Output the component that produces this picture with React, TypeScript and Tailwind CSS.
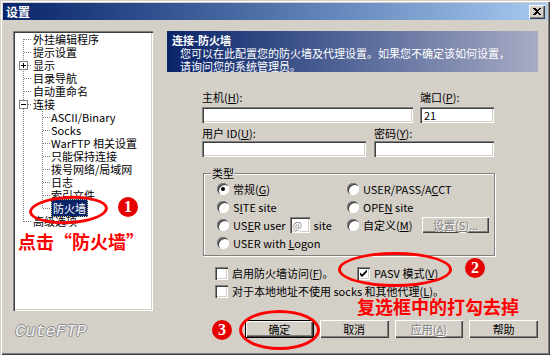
import React from 'react';

const raised =
  'bg-[#d4d0c8] shadow-[inset_1px_1px_0_#ffffff,inset_-1px_-1px_0_#404040,inset_-2px_-2px_0_#808080]';
const sunken =
  'bg-white shadow-[inset_1px_1px_0_#808080,inset_2px_2px_0_#404040,inset_-1px_-1px_0_#ffffff,inset_-2px_-2px_0_#d4d0c8]';
const dimText = 'text-[#808080] [text-shadow:1px_1px_0_#ffffff]';

type TreeNode = { label: string; depth: 0 | 1; selected?: boolean };

const tree: TreeNode[] = [
  { label: '外挂编辑程序', depth: 0 },
  { label: '提示设置', depth: 0 },
  { label: '显示', depth: 0 },
  { label: '目录导航', depth: 0 },
  { label: '自动重命名', depth: 0 },
  { label: '连接', depth: 0 },
  { label: 'ASCII/Binary', depth: 1 },
  { label: 'Socks', depth: 1 },
  { label: 'WarFTP 相关设置', depth: 1 },
  { label: '只能保持连接', depth: 1 },
  { label: '拨号网络/局域网', depth: 1 },
  { label: '日志', depth: 1 },
  { label: '索引文件', depth: 1 },
  { label: '防火墙', depth: 1, selected: true },
  { label: '高级选项', depth: 0 },
];

function U({ children }: { children: React.ReactNode }) {
  return <span className="underline underline-offset-1">{children}</span>;
}

function TreeLines() {
  const cy = (i: number) => i * 13 + 6.5;
  return (
    <svg
      className="absolute left-[2px] top-[2px] pointer-events-none"
      width="136"
      height="200"
      shapeRendering="crispEdges"
    >
      <g stroke="#808080" strokeDasharray="1 1" strokeWidth="1">
        <line x1="8.5" y1="6" x2="8.5" y2="189" />
        <line x1="27.5" y1="72" x2="27.5" y2="176" />
        {tree.map((n, i) =>
          n.depth === 0 ? (
            <line key={i} x1={i === 2 || i === 5 ? 13 : 9} y1={cy(i)} x2="16" y2={cy(i)} />
          ) : (
            <line key={i} x1="28" y1={cy(i)} x2="35" y2={cy(i)} />
          )
        )}
      </g>
      {[2, 5].map((i) => (
        <g key={i}>
          <rect x="4.5" y={cy(i) - 4} width="8" height="8" fill="#fff" stroke="#808080" />
          <line x1="6" y1={cy(i)} x2="11" y2={cy(i)} stroke="#000" />
          {i === 2 && <line x1="8.5" y1={cy(i) - 2.5} x2="8.5" y2={cy(i) + 2.5} stroke="#000" />}
        </g>
      ))}
    </svg>
  );
}

function Radio({ checked }: { checked?: boolean }) {
  return (
    <span className="w-3 h-3 shrink-0 rounded-full bg-white shadow-[inset_1px_1px_0_#808080,inset_2px_2px_0_#404040,inset_-1px_-1px_0_#ffffff] flex items-center justify-center">
      {checked && <span className="w-1 h-1 rounded-full bg-black" />}
    </span>
  );
}

function Check({ checked }: { checked?: boolean }) {
  return (
    <span className={`w-[13px] h-[13px] shrink-0 ${sunken} flex items-center justify-center`}>
      {checked && (
        <svg width="7" height="7" viewBox="0 0 7 7">
          <path d="M0 2.5L2 4.5L7 -0.5V2L2 7L0 5Z" fill="#000" />
        </svg>
      )}
    </span>
  );
}

function Btn({ children, def, disabled }: { children: React.ReactNode; def?: boolean; disabled?: boolean }) {
  return (
    <div
      className={`w-[69px] h-[18px] flex items-center justify-center ${raised} ${
        def ? 'border border-black' : ''
      } ${disabled ? dimText : ''}`}
    >
      {children}
    </div>
  );
}

export default function App() {
  return (
    <div className="relative w-[550px] h-[355px] bg-[#d4d0c8] p-[3px] text-black text-[11px] leading-[13px] font-['Noto_Sans_CJK_SC',sans-serif] shadow-[inset_1px_1px_0_#d4d0c8,inset_2px_2px_0_#ffffff,inset_-1px_-1px_0_#404040,inset_-2px_-2px_0_#808080] overflow-hidden">
      {/* title bar */}
      <div className="h-[17px] flex items-center justify-between bg-linear-to-r from-[#0a246a] to-[#a6caf0] pl-[3px] pr-[2px]">
        <span className="text-white font-bold text-[12px]">设置</span>
        <div className={`w-[16px] h-[14px] ${raised} flex items-center justify-center`}>
          <svg width="8" height="7" viewBox="0 0 8 7" shapeRendering="crispEdges">
            <path d="M0 0h2l2 2 2-2h2L5 3.5 8 7H6L4 5 2 7H0l3-3.5z" fill="#000" />
          </svg>
        </div>
      </div>

      <div className="flex pt-[11px] pl-[10px] gap-[14px]">
        {/* left: tree */}
        <div className="w-[140px] flex flex-col">
          <div className={`relative h-[280px] ${sunken} p-[2px]`}>
            <TreeLines />
            {tree.map((n) => (
              <div
                key={n.label}
                className={`h-[13px] leading-[13px] whitespace-nowrap ${n.depth === 0 ? 'pl-[18px]' : 'pl-[36px]'}`}
              >
                {n.selected ? (
                  <span className="bg-[#0a246a] text-white border border-dotted border-[#c8c88a] px-[1px]">
                    {n.label}
                  </span>
                ) : (
                  n.label
                )}
              </div>
            ))}
          </div>
          <div className="mt-[12px] pl-[2px] font-['Liberation_Mono',monospace] italic text-[17px] leading-[18px] text-[#f4f4f4] [text-shadow:-1px_0_0_#8a8a8a,1px_0_0_#8a8a8a,0_-1px_0_#8a8a8a,0_1px_0_#8a8a8a]">
            CuteFTP
          </div>
        </div>

        {/* right panel */}
        <div className="w-[371px] flex flex-col">
          <div className="h-[41px] bg-linear-to-r from-[#0a246a] to-[#a8abc4] text-white pt-[3px] pl-[5px]">
            <div className="font-bold">连接-防火墙</div>
            <div className="pl-[8px]">您可以在此配置您的防火墙及代理设置。如果您不确定该如何设置，</div>
            <div className="pl-[8px]">请询问您的系统管理员。</div>
          </div>

          <div className="mt-[19px] flex pl-[35px] h-[13px]">
            <span className="w-[218px]">
              主机(<U>H</U>):
            </span>
            <span>
              端口(<U>P</U>):
            </span>
          </div>
          <div className="mt-[3px] flex pl-[35px] gap-[7px]">
            <div className={`w-[211px] h-[16px] ${sunken}`} />
            <div className={`w-[74px] h-[16px] ${sunken} pl-[4px] leading-[16px]`}>21</div>
          </div>

          <div className="mt-[4px] flex pl-[35px] h-[13px]">
            <span className="w-[172px]">
              用户 ID(<U>U</U>):
            </span>
            <span>
              密码(<U>Y</U>):
            </span>
          </div>
          <div className="mt-[1px] flex pl-[35px] gap-[8px]">
            <div className={`w-[164px] h-[16px] ${sunken}`} />
            <div className={`w-[120px] h-[16px] ${sunken}`} />
          </div>

          {/* type group */}
          <div className="relative mt-[16px] ml-[36px] w-[292px] h-[83px] border border-[#808080] shadow-[inset_1px_1px_0_#ffffff,1px_1px_0_#ffffff] pt-[6px] pl-[13px]">
            <span className="absolute -top-[7px] left-[7px] px-[1px] bg-[#d4d0c8]">类型</span>
            <div className="grid grid-cols-[130px_1fr]">
              <div className="h-[18px] flex items-center gap-[4px]">
                <Radio checked />
                <span>
                  常规(<U>G</U>)
                </span>
              </div>
              <div className="h-[18px] flex items-center gap-[4px]">
                <Radio />
                <span>
                  USER/PASS/A<U>C</U>CT
                </span>
              </div>

              <div className="h-[18px] flex items-center gap-[4px]">
                <Radio />
                <span>
                  S<U>I</U>TE site
                </span>
              </div>
              <div className="h-[18px] flex items-center gap-[4px]">
                <Radio />
                <span>
                  OPE<U>N</U> site
                </span>
              </div>

              <div className="h-[18px] flex items-center gap-[4px]">
                <Radio />
                <span>
                  US<U>E</U>R user
                </span>
                <div className={`w-[20px] h-[16px] ${sunken} bg-[#d4d0c8] ${dimText} pl-[3px] leading-[15px] text-[10px]`}>@</div>
                <span>site</span>
              </div>
              <div className="h-[18px] flex items-center gap-[4px]">
                <Radio />
                <span className="w-[55px]">
                  自定义(<U>M</U>)
                </span>
                <div className={`w-[67px] h-[16px] ${raised} ${dimText} flex items-center justify-center`}>
                  设置(<U>S</U>)...
                </div>
              </div>

              <div className="h-[18px] flex items-center gap-[4px]">
                <Radio />
                <span>
                  USER with <U>L</U>ogon
                </span>
              </div>
            </div>
          </div>

          {/* checkboxes */}
          <div className="mt-[11px] flex pl-[48px] h-[13px]">
            <div className="w-[142px] flex items-center gap-[4px]">
              <Check />
              <span>
                启用防火墙访问(<U>F</U>)。
              </span>
            </div>
            <div className="flex items-center gap-[4px]">
              <Check checked />
              <span>
                PASV 模式(<U>V</U>)
              </span>
            </div>
          </div>
          <div className="mt-[5px] flex pl-[48px] h-[13px] items-center gap-[4px]">
            <Check />
            <span>
              对于本地地址不使用 socks 和其他代理(<U>L</U>)。
            </span>
          </div>

          {/* buttons */}
          <div className="mt-[22px] flex pl-[78px] gap-[6px]">
            <Btn def>确定</Btn>
            <Btn>取消</Btn>
            <Btn disabled>
              应用(<U>A</U>)
            </Btn>
            <Btn>帮助</Btn>
          </div>
        </div>
      </div>

      {/* red annotations */}
      <div className="absolute left-[29px] top-[196px] w-[79px] h-[28px] rounded-[50%] border-[3px] border-[#f00] -rotate-3 pointer-events-none" />
      <div className="absolute left-[118px] top-[197px] w-[20px] h-[20px] rounded-full bg-[#e60000] text-white font-bold text-[16px] leading-[20px] text-center font-['Liberation_Serif',serif]">
        1
      </div>
      <div className="absolute left-[18px] top-[230px] text-[#f00] font-bold text-[18px] leading-[22px] whitespace-nowrap">
        点击“防火墙”
      </div>

      <div className="absolute left-[338px] top-[252px] w-[114px] h-[35px] rounded-[50%] border-[3px] border-[#f00] pointer-events-none" />
      <div className="absolute left-[465px] top-[258px] w-[20px] h-[20px] rounded-full bg-[#e60000] text-white font-bold text-[16px] leading-[20px] text-center font-['Liberation_Serif',serif]">
        2
      </div>
      <div className="absolute left-[357px] top-[295px] text-[#f00] font-bold text-[18px] leading-[22px] whitespace-nowrap">
        复选框中的打勾去掉
      </div>

      <div className="absolute left-[239px] top-[310px] w-[81px] h-[40px] rounded-[50%] border-[3px] border-[#f00] pointer-events-none" />
      <div className="absolute left-[212px] top-[320px] w-[20px] h-[20px] rounded-full bg-[#e60000] text-white font-bold text-[16px] leading-[20px] text-center font-['Liberation_Serif',serif]">
        3
      </div>
    </div>
  );
}
